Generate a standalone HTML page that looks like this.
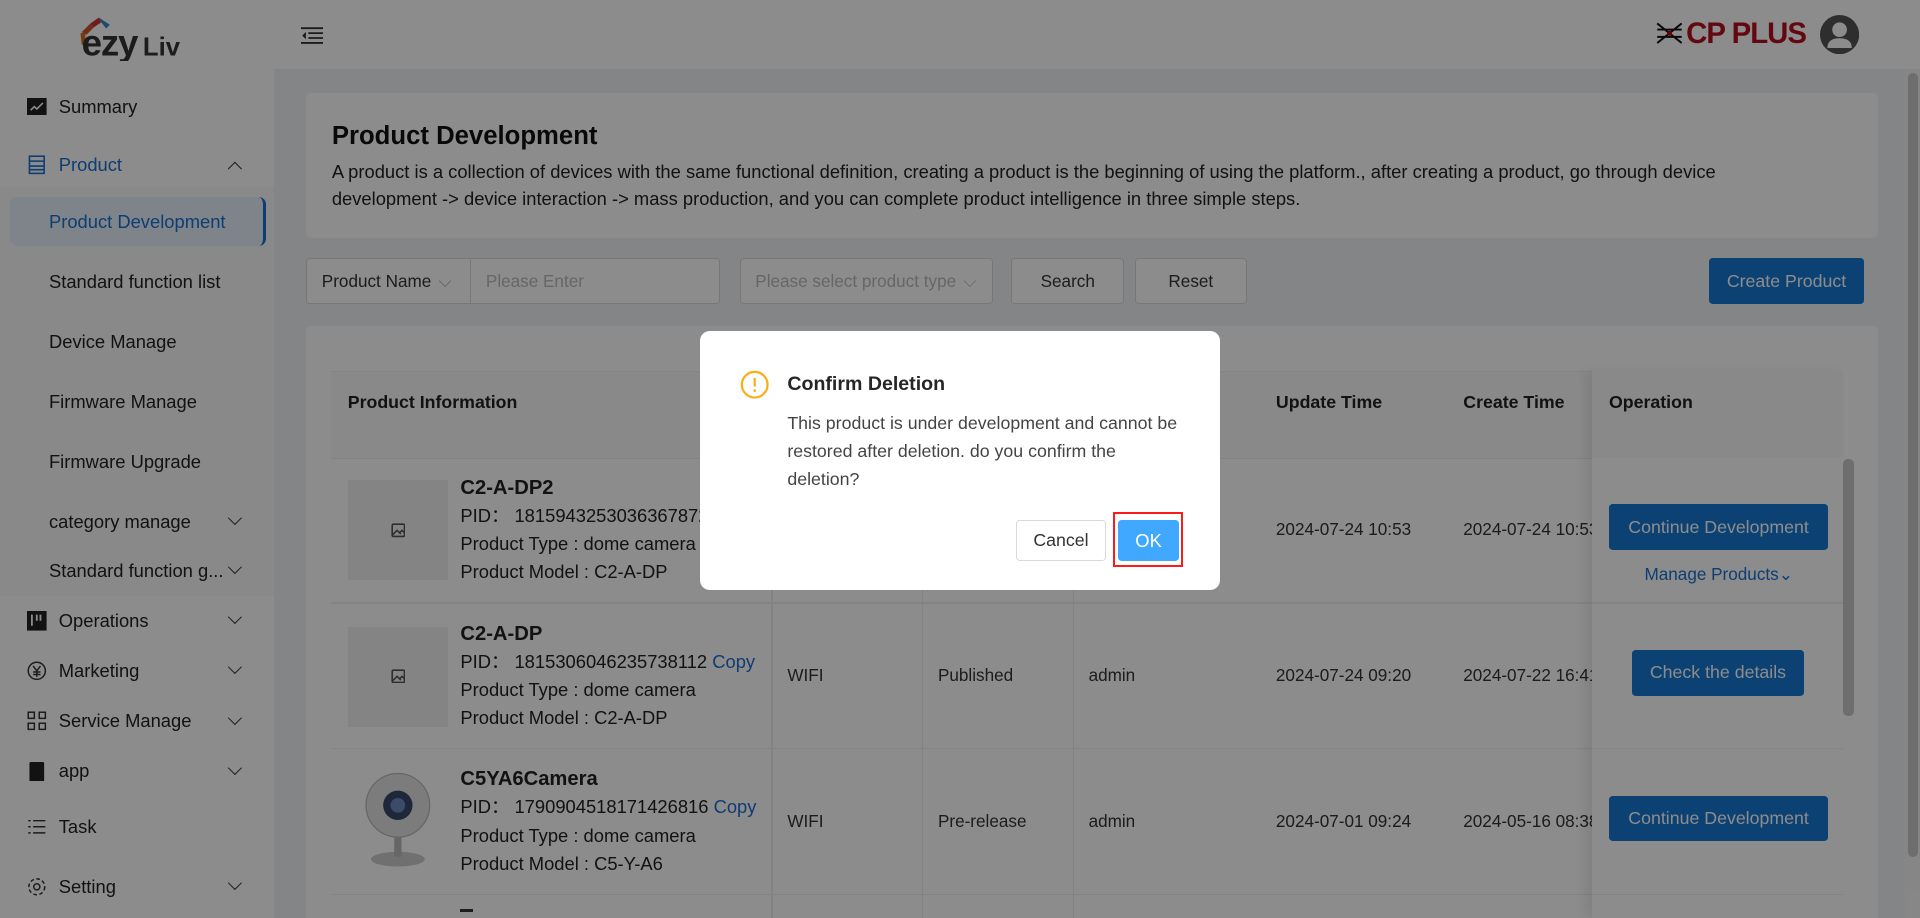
<!DOCTYPE html>
<html><head><meta charset="utf-8"><style>
*{box-sizing:border-box;margin:0;padding:0}
html,body{width:1920px;height:918px;overflow:hidden;background:#fff;font-family:"Liberation Sans",sans-serif}
#w{position:relative;width:1568px;height:750px;zoom:1.2244898;overflow:hidden;background:#f0f2f5;color:#222}
.a{position:absolute}
.side{left:0;top:0;width:224px;height:750px;background:#fff}
.hdr{left:0;top:0;width:1568px;height:56px;background:#fff}
.mi{position:absolute;left:22px;font-size:15px;color:#222;display:flex;align-items:center;gap:10px}
.sub{position:absolute;left:40px;font-size:15px;color:#222}
.chev{position:absolute;left:188px;width:8px;height:8px;border-right:1.6px solid #333;border-bottom:1.6px solid #333;transform:rotate(45deg)}
.card{background:#fff;border-radius:4px}
.btn{position:absolute;border:1px solid #d9d9d9;background:#fff;border-radius:3px;font-size:14px;color:#333;display:flex;align-items:center;justify-content:center}
.bb{position:absolute;background:#1677d2;color:#fff;border-radius:3px;font-size:14.5px;display:flex;align-items:center;justify-content:center}
.th{position:absolute;top:320px;font-size:14.5px;font-weight:bold;color:#222}
.td{position:absolute;font-size:14px;color:#333}
.pn{position:absolute;left:376px;font-size:15px;line-height:23px;color:#222}
.pn b{font-size:16.5px}
.ph{position:absolute;left:284px;width:82px;height:82px;background:#f0f0f0}
.cp{color:#1a6fd0}
.hl{position:absolute;left:270px;width:1235px;height:1px;background:#eee}
.vl{position:absolute;width:1px;background:#eee}
</style></head><body><div id="w">
<div class="a hdr"></div>
<div class="a side"></div>
<!-- logo -->
<svg class="a" style="left:64px;top:12px" width="100" height="38" viewBox="0 0 100 38">
<path d="M3 14 L10 7 L13 10 L7 16 Z" fill="#c8552a"/><path d="M10 7 L17 2 L19 6 L13 10 Z" fill="#cc3333"/><path d="M17 2 L26 8 L23 11 L19 6Z" fill="#2a8fc0"/><path d="M2 15 L6 14 L6 26 L3 24Z" fill="#d07020"/>
<text x="3" y="33" font-family="Liberation Sans" font-weight="bold" font-size="30" fill="#333" letter-spacing="-1">ezy</text>
<text x="53" y="33" font-family="Liberation Sans" font-weight="bold" font-size="21" fill="#333">Liv</text></svg>
<svg class="a" style="left:246px;top:22px" width="18" height="14" viewBox="0 0 18 14" stroke="#333" stroke-width="1.5"><path d="M0 1H18M6 5H18M6 9H18M0 13H18"/><path d="M4 4L1 7L4 10Z" fill="#333" stroke="none"/></svg>
<svg class="a" style="left:1352px;top:17px" width="22" height="20" viewBox="0 0 22 20" stroke="#111" stroke-width="1.6" fill="none"><path d="M1 2L11 10L21 2M1 18L11 10L21 18M1 7H21M1 13H21"/><circle cx="11" cy="10" r="2" fill="#c00" stroke="none"/></svg>
<div class="a" style="left:1377px;top:14px;font-size:24px;font-weight:bold;color:#b40f1e;letter-spacing:-0.8px">CP PLUS</div>
<svg class="a" style="left:1486px;top:12px" width="32" height="32" viewBox="0 0 32 32"><circle cx="16" cy="16" r="16" fill="#555"/><circle cx="16" cy="12" r="6" fill="#fff"/><path d="M6 27 Q6 19 16 19 Q26 19 26 27Z" fill="#fff"/></svg>
<!-- sidebar -->
<div class="mi" style="top:78px"><svg width="16" height="14"><rect width="16" height="14" fill="#222"/><path d="M3 10L6 7L8 9L13 4" stroke="#fff" fill="none" stroke-width="1.3"/></svg>Summary</div>
<div class="mi" style="top:126px;color:#1a6fd0"><svg width="16" height="16" fill="none" stroke="#1a6fd0" stroke-width="1.3"><rect x="2" y="1" width="12" height="14"/><path d="M2 5H14M2 9H14M2 12H14"/></svg>Product</div>
<div class="chev" style="top:134px;transform:rotate(225deg)"></div>
<div class="a" style="left:0;top:153px;width:224px;height:334px;background:#fafafa"></div>
<div class="a" style="left:8px;top:161px;width:209px;height:40px;background:#e6f0fb;border-radius:6px;border-right:3px solid #1a6fd0"></div>
<div class="sub" style="top:172px;color:#1a6fd0">Product Development</div>
<div class="sub" style="top:221px">Standard function list</div>
<div class="sub" style="top:270px">Device Manage</div>
<div class="sub" style="top:319px">Firmware Manage</div>
<div class="sub" style="top:368px">Firmware Upgrade</div>
<div class="sub" style="top:417px">category manage</div><div class="chev" style="top:419px"></div>
<div class="sub" style="top:457px">Standard function g...</div><div class="chev" style="top:459px"></div>
<div class="mi" style="top:498px"><svg width="16" height="16"><rect width="16" height="16" fill="#222"/><path d="M4 3V12M8 3V8M11 3V8" stroke="#fff" stroke-width="1.5"/></svg>Operations</div><div class="chev" style="top:500px"></div>
<div class="mi" style="top:539px"><svg width="16" height="16" fill="none" stroke="#333" stroke-width="1.2"><circle cx="8" cy="8" r="7"/><path d="M5 4L8 8L11 4M8 8V13M5 9H11M5 11H11"/></svg>Marketing</div><div class="chev" style="top:541px"></div>
<div class="mi" style="top:580px"><svg width="16" height="16" fill="none" stroke="#333" stroke-width="1.2"><rect x="1" y="1" width="5" height="5"/><rect x="10" y="1" width="5" height="5"/><rect x="1" y="10" width="5" height="5"/><rect x="10" y="10" width="5" height="5"/></svg>Service Manage</div><div class="chev" style="top:582px"></div>
<div class="mi" style="top:621px"><svg width="16" height="16"><rect x="2" width="12" height="16" rx="1" fill="#222"/></svg>app</div><div class="chev" style="top:623px"></div>
<div class="mi" style="top:666px"><svg width="16" height="16" stroke="#333" stroke-width="1.2"><path d="M1 3H3M5 3H15M1 8H3M5 8H15M1 13H3M5 13H15"/></svg>Task</div>
<div class="mi" style="top:715px"><svg width="16" height="16" fill="none" stroke="#333" stroke-width="1.2"><circle cx="8" cy="8" r="2.5"/><circle cx="8" cy="8" r="6.5" stroke-dasharray="3 2"/></svg>Setting</div><div class="chev" style="top:717px"></div>
<!-- main -->
<div class="a" style="left:1555px;top:56px;width:13px;height:694px;background:#f5f5f5"></div>
<div class="a" style="left:1558px;top:60px;width:8px;height:640px;background:#c8c8c8;border-radius:4px"></div>
<div class="a card" style="left:250px;top:76px;width:1284px;height:118px"></div>
<div class="a" style="left:271px;top:100px;font-size:21px;font-weight:bold;color:#111">Product Development</div>
<div class="a" style="left:271px;top:130px;width:1150px;font-size:15px;line-height:22px;color:#222">A product is a collection of devices with the same functional definition, creating a product is the beginning of using the platform., after creating a product, go through device development -&gt; device interaction -&gt; mass production, and you can complete product intelligence in three simple steps.</div>
<div class="btn" style="left:250px;top:211px;width:135px;height:37px;justify-content:flex-start;padding-left:12px;border-radius:3px 0 0 3px">Product Name <span style="color:#aaa;margin-left:6px">⌵</span></div>
<div class="btn" style="left:384px;top:211px;width:204px;height:37px;justify-content:flex-start;padding-left:12px;color:#bbb;border-radius:0 3px 3px 0">Please Enter</div>
<div class="btn" style="left:604px;top:211px;width:207px;height:37px;justify-content:flex-start;padding-left:12px;color:#bbb">Please select product type <span style="margin-left:6px">⌵</span></div>
<div class="btn" style="left:826px;top:211px;width:92px;height:37px">Search</div>
<div class="btn" style="left:927px;top:211px;width:91px;height:37px">Reset</div>
<div class="bb" style="left:1396px;top:211px;width:126px;height:37px">Create Product</div>
<div class="a card" style="left:250px;top:266px;width:1284px;height:500px"></div>
<div class="a" style="left:270px;top:303px;width:1235px;height:71px;background:#fafafa"></div>
<div class="hl" style="top:303px"></div><div class="hl" style="top:374px"></div><div class="hl" style="top:492px"></div><div class="hl" style="top:611px"></div><div class="hl" style="top:730px"></div>
<div class="vl" style="left:630px;top:374px;height:376px"></div><div class="vl" style="left:753px;top:374px;height:376px"></div><div class="vl" style="left:876px;top:374px;height:376px"></div>
<div class="td" style="left:1042px;top:424px">2024-07-24 10:53</div><div class="td" style="left:1195px;top:424px">2024-07-24 10:53</div>
<div class="td" style="left:643px;top:543px">WIFI</div><div class="td" style="left:766px;top:543px">Published</div><div class="td" style="left:889px;top:543px">admin</div>
<div class="td" style="left:1042px;top:543px">2024-07-24 09:20</div><div class="td" style="left:1195px;top:543px">2024-07-22 16:41</div>
<div class="td" style="left:643px;top:662px">WIFI</div><div class="td" style="left:766px;top:662px">Pre-release</div><div class="td" style="left:889px;top:662px">admin</div>
<div class="td" style="left:1042px;top:662px">2024-07-01 09:24</div><div class="td" style="left:1195px;top:662px">2024-05-16 08:38</div>
<div class="a" style="left:1300px;top:303px;width:205px;height:447px;background:#fff;box-shadow:-6px 0 8px rgba(0,0,0,.08)"></div>
<div class="a" style="left:1300px;top:303px;width:205px;height:71px;background:#fafafa"></div>
<div class="a" style="left:1300px;top:492px;width:205px;height:1px;background:#eee"></div><div class="a" style="left:1300px;top:611px;width:205px;height:1px;background:#eee"></div><div class="a" style="left:1300px;top:730px;width:205px;height:1px;background:#eee"></div>
<div class="a" style="left:1505px;top:375px;width:9px;height:210px;background:#c8c8c8;border-radius:4px"></div>
<div class="th" style="left:284px">Product Information</div>
<div class="th" style="left:1042px">Update Time</div>
<div class="th" style="left:1195px">Create Time</div>
<div class="th" style="left:1314px">Operation</div>
<div class="ph" style="top:392px"></div><svg class="a" style="left:319px;top:427px" width="12" height="12" viewBox="0 0 12 12" fill="none" stroke="#555" stroke-width="1.3"><rect x="1" y="1" width="10" height="10" rx="1"/><path d="M1 10L5 6L8 9M7 8L9 6L11 8"/></svg>
<div class="pn" style="top:387px"><b>C2-A-DP2</b><br>PID： 1815943253036367872<br>Product Type : dome camera<br>Product Model : C2-A-DP</div>
<div class="ph" style="top:512px"></div><svg class="a" style="left:319px;top:546px" width="12" height="12" viewBox="0 0 12 12" fill="none" stroke="#555" stroke-width="1.3"><rect x="1" y="1" width="10" height="10" rx="1"/><path d="M1 10L5 6L8 9M7 8L9 6L11 8"/></svg>
<div class="pn" style="top:506px"><b>C2-A-DP</b><br>PID： 1815306046235738112 <span class="cp">Copy</span><br>Product Type : dome camera<br>Product Model : C2-A-DP</div>
<div class="a" style="left:284px;top:629px;width:82px;height:82px;background:#fff"></div>
<svg class="a" style="left:290px;top:630px" width="70" height="80" viewBox="0 0 70 80"><ellipse cx="35" cy="72" rx="22" ry="6" fill="#ccc"/><path d="M35 50 L35 70" stroke="#bbb" stroke-width="6"/><circle cx="35" cy="28" r="26" fill="#e2e2e2" stroke="#bbb"/><circle cx="35" cy="28" r="12" fill="#3a4a6a"/><circle cx="35" cy="28" r="6" fill="#6a8ac0"/></svg>
<div class="pn" style="top:625px"><b>C5YA6Camera</b><br>PID： 1790904518171426816 <span class="cp">Copy</span><br>Product Type : dome camera<br>Product Model : C5-Y-A6</div>
<div class="bb" style="left:1314px;top:412px;width:179px;height:37px">Continue Development</div>
<div class="td" style="left:1343px;top:461px;color:#1a6fd0">Manage Products⌄</div>
<div class="bb" style="left:1333px;top:531px;width:140px;height:37px">Check the details</div>
<div class="bb" style="left:1314px;top:650px;width:179px;height:37px">Continue Development</div>
<div class="a" style="left:376px;top:742px;width:10px;height:3px;background:#333"></div>
<!-- overlay -->
<div class="a" style="left:0;top:0;width:1568px;height:750px;background:rgba(0,0,0,.45)"></div>
<div class="a" style="left:572px;top:270px;width:424px;height:212px;background:#fff;border-radius:8px"></div>
<svg class="a" style="left:604px;top:302px" width="24" height="24" viewBox="0 0 24 24"><circle cx="12" cy="12" r="10.5" fill="none" stroke="#faad14" stroke-width="1.8"/><path d="M12 6.5V13.5" stroke="#faad14" stroke-width="1.8"/><circle cx="12" cy="16.8" r="1.1" fill="#faad14"/></svg>
<div class="a" style="left:643px;top:305px;font-size:16px;font-weight:bold;color:#262626">Confirm Deletion</div>
<div class="a" style="left:643px;top:334px;width:330px;font-size:14.5px;line-height:23px;color:#444">This product is under development and cannot be restored after deletion. do you confirm the deletion?</div>
<div class="btn" style="left:830px;top:425px;width:73px;height:33px;font-size:14.5px">Cancel</div>
<div class="a" style="left:909px;top:418px;width:57px;height:45px;border:2px solid #ff1a1a"></div>
<div class="a" style="left:913px;top:425px;width:50px;height:33px;background:#40a9ff;border-radius:3px;color:#fff;font-size:15px;display:flex;align-items:center;justify-content:center">OK</div>
</div></body></html>
